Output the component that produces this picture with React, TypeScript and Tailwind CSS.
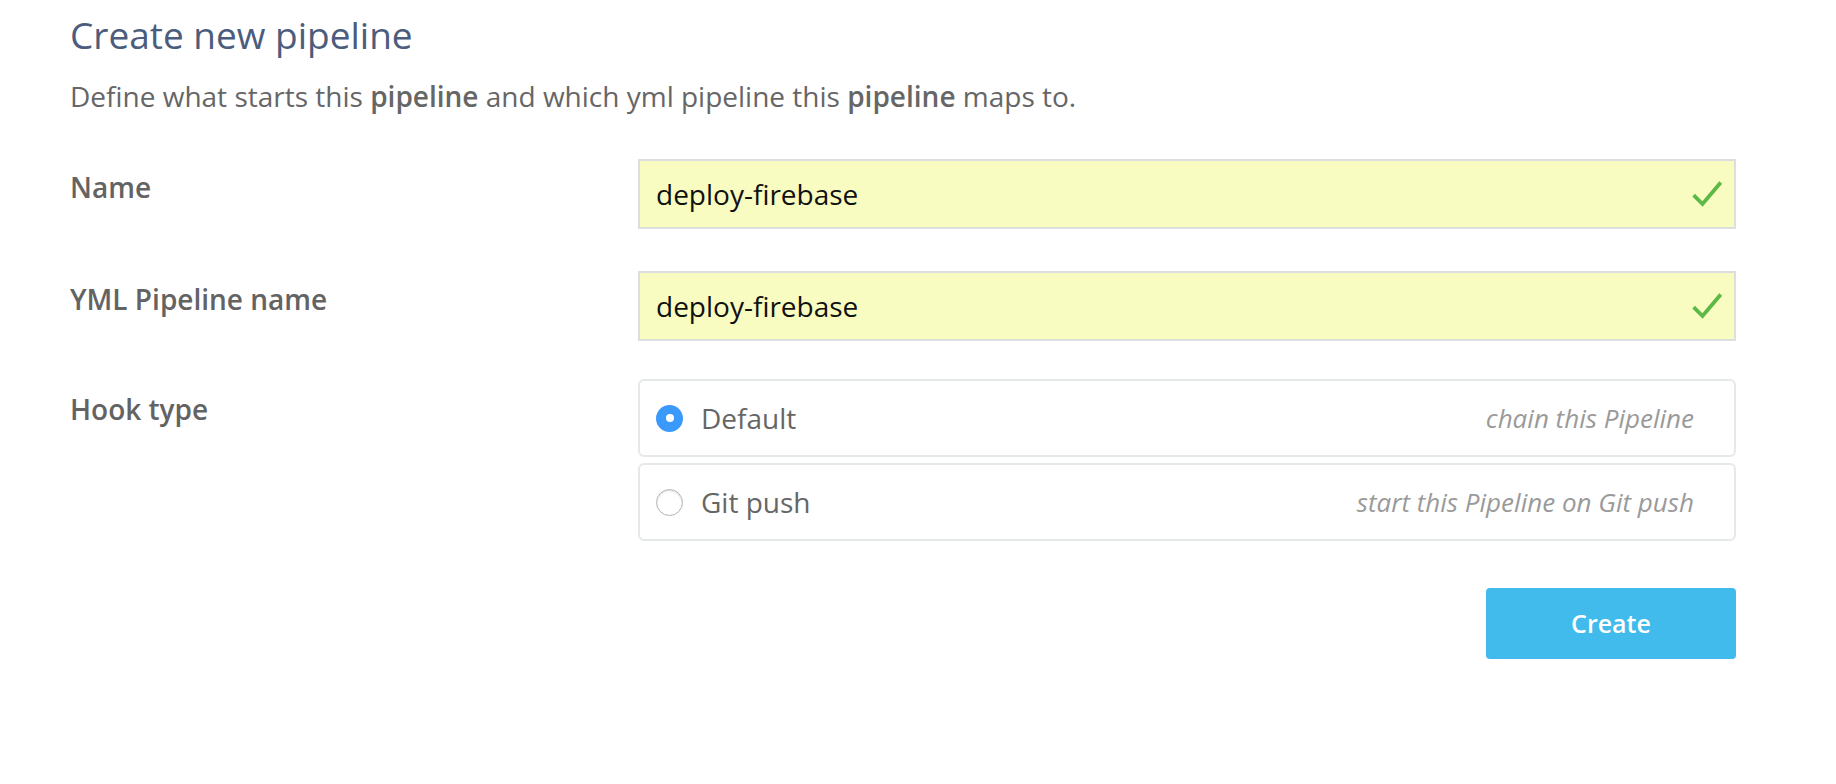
import { useState } from "react";

function Check() {
  return (
    <svg width="30" height="27" viewBox="0 0 30 27" fill="none">
      <path d="M3 15.5 L10.5 23 L27.5 3" stroke="#5cb947" strokeWidth="3.8" strokeLinecap="square" />
    </svg>
  );
}

function TextRow({ label, value }: { label: string; value: string }) {
  return (
    <div className="flex">
      <label className="w-[568px] shrink-0 pt-[11px] text-[28px] font-semibold leading-[34px] text-[#636363]">
        {label}
      </label>
      <div className="flex h-[70px] flex-1 items-center border-2 border-[#dcdedf] bg-[#f9fcc0] pl-[16px] pr-[12px]">
        <input
          value={value}
          readOnly
          className="flex-1 bg-transparent text-[28px] text-[#111] outline-none"
        />
        <Check />
      </div>
    </div>
  );
}

const hooks = [
  { id: "default", label: "Default", hint: "chain this Pipeline" },
  { id: "git", label: "Git push", hint: "start this Pipeline on Git push" },
];

export default function App() {
  const [hook, setHook] = useState("default");

  return (
    <div className="min-h-screen bg-white pl-[70px] pr-[100px] pt-[13px] font-['Open_Sans',sans-serif]">
      <h1 className="text-[37px] leading-[43px] text-[#4b5c7c]">Create new pipeline</h1>
      <p className="mt-[23px] text-[28px] leading-[34px] text-[#666]">
        Define what starts this <b className="font-semibold">pipeline</b> and which yml pipeline this{" "}
        <b className="font-semibold">pipeline</b> maps to.
      </p>

      <div className="mt-[46px] flex flex-col gap-[42px]">
        <TextRow label="Name" value="deploy-firebase" />
        <TextRow label="YML Pipeline name" value="deploy-firebase" />
      </div>

      <div className="mt-[38px] flex">
        <div className="w-[568px] shrink-0 pt-[13px] text-[28px] font-semibold leading-[34px] text-[#636363]">
          Hook type
        </div>
        <div className="flex flex-1 flex-col gap-[6px]">
          {hooks.map((h) => (
            <button
              key={h.id}
              onClick={() => setHook(h.id)}
              className="flex h-[78px] items-center rounded-[6px] border-2 border-[#e6e9e9] pl-[16px] pr-[40px] text-left"
            >
              {hook === h.id ? (
                <span className="flex h-[27px] w-[27px] items-center justify-center rounded-full bg-[#3b99fc]">
                  <span className="h-[8px] w-[8px] rounded-full bg-white" />
                </span>
              ) : (
                <span className="h-[27px] w-[27px] rounded-full border border-[#b5b5b5] bg-white shadow-[inset_0_1px_2px_rgba(0,0,0,0.15)]" />
              )}
              <span className="ml-[18px] flex-1 text-[28px] text-[#666]">{h.label}</span>
              <span className="text-[26px] italic text-[#9a9a9a]">{h.hint}</span>
            </button>
          ))}
        </div>
      </div>

      <div className="mt-[47px] flex justify-end">
        <button className="h-[71px] w-[250px] rounded-[4px] bg-[#40bbeb] text-[25px] font-semibold text-white">
          Create
        </button>
      </div>
    </div>
  );
}
